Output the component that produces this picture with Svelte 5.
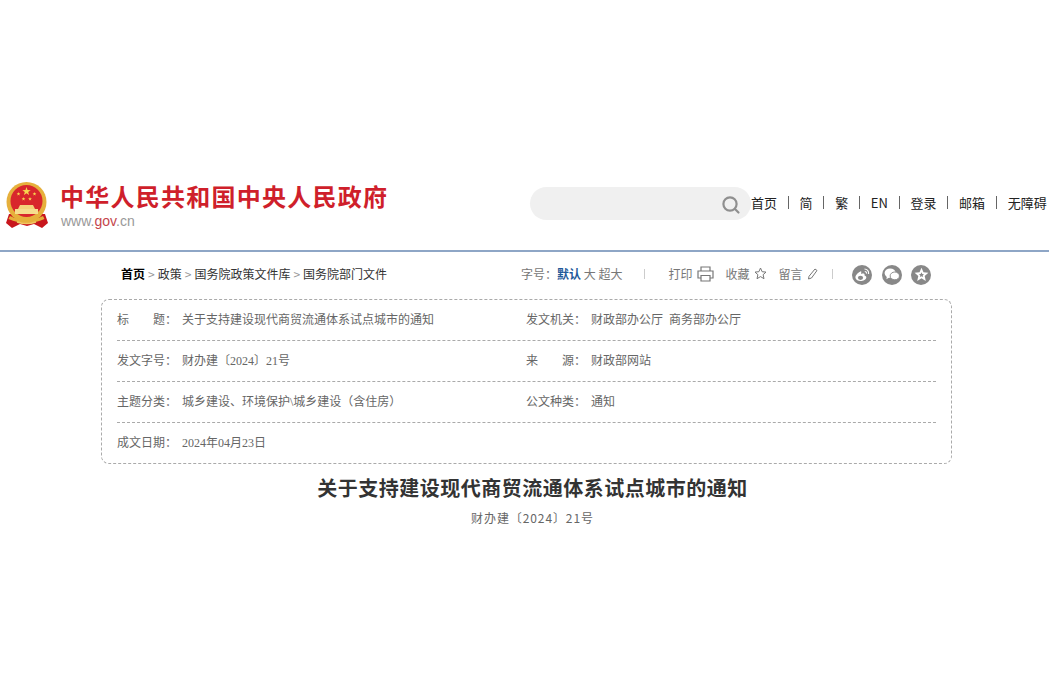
<script>
  const navItems = ['首页', '简', '繁', 'EN', '登录', '邮箱', '无障碍'];
  const infoRows = [
    [['标　　题：', '关于支持建设现代商贸流通体系试点城市的通知'], ['发文机关：', '财政部办公厅  商务部办公厅']],
    [['发文字号：', '财办建〔2024〕21号'], ['来　　源：', '财政部网站']],
    [['主题分类：', '城乡建设、环境保护\\城乡建设（含住房）'], ['公文种类：', '通知']],
    [['成文日期：', '2024年04月23日']]
  ];

  // five-point star for the emblem
  function star(cx, cy, r) {
    const pts = [];
    for (let i = 0; i < 10; i++) {
      const rad = i % 2 ? r * 0.4 : r;
      const a = -Math.PI / 2 + (i * Math.PI) / 5;
      pts.push((cx + rad * Math.cos(a)).toFixed(2) + ',' + (cy + rad * Math.sin(a)).toFixed(2));
    }
    return pts.join(' ');
  }

  const smallStars = [[13.5, 13], [18.5, 18], [25, 18], [29.5, 13]];
</script>

<div class="page">
  <header class="header">
    <div class="logo">
      <svg class="emblem" width="44" height="48" viewBox="0 0 44 48">
        <path d="M4 33 L1 42 L7 47 L15 43 L22 45 L29 43 L37 47 L43 42 L40 33 Z" fill="#c8161d" />
        <circle cx="21.5" cy="21" r="20" fill="#e6b03c" />
        <circle cx="21.5" cy="20" r="16" fill="#d8262c" />
        <polygon points={star(21.5, 10.5, 4.4)} fill="#f7d64f" />
        {#each smallStars as s}
          <polygon points={star(s[0], s[1], 2)} fill="#f7d64f" />
        {/each}
        <path d="M15 24 h13 l2 4 h-17 Z" fill="#f3d27a" />
        <path d="M10 28 h23 v5 h-23 Z" fill="#f6dd8e" />
        <path d="M5 35 q16.5 8 33 0 l1.5 3 q-18 8 -36 0 Z" fill="#e6b03c" />
        <path d="M12 41 q9.5 3 19 0" fill="none" stroke="#f0c860" stroke-width="1.4" />
      </svg>
      <div class="logo-text">
        <div class="logo-title">中华人民共和国中央人民政府</div>
        <div class="logo-url">www.<b>gov</b>.cn</div>
      </div>
    </div>
    <div class="search">
      <svg width="20" height="20" viewBox="0 0 20 20" fill="none" stroke="#8f8f8f" stroke-width="2.2">
        <circle cx="9" cy="9" r="6.6" />
        <path d="M14 14 L17.5 17.5" stroke-linecap="round" />
      </svg>
    </div>
    <nav class="nav">
      {#each navItems as item, i}
        {#if i > 0}<span class="nav-sep"></span>{/if}
        <span>{item}</span>
      {/each}
    </nav>
  </header>

  <main class="content">
    <div class="toolbar">
      <div class="crumbs">
        <b>首页</b><i>&gt;</i>政策<i>&gt;</i>国务院政策文件库<i>&gt;</i>国务院部门文件
      </div>
      <div class="tools">
        <span class="size-label">字号：<b>默认</b> 大 超大</span>
        <span class="tool-sep first"></span>
        <span class="tool t-print">打印
          <svg width="17" height="16" viewBox="0 0 17 16" fill="none" stroke="#777" stroke-width="1.2">
            <path d="M4 5 V1 H13 V5 M4 12 H1 V5 H16 V12 H13 M4 9.5 H13 V15 H4 Z" />
          </svg>
        </span>
        <span class="tool t-fav">收藏
          <svg width="13" height="13" viewBox="0 0 13 13" fill="none" stroke="#777" stroke-width="1">
            <path d="M6.5 1 L8.1 4.7 L12 5.1 L9.1 7.7 L10 11.7 L6.5 9.6 L3 11.7 L3.9 7.7 L1 5.1 L4.9 4.7 Z" />
          </svg>
        </span>
        <span class="tool t-msg">留言
          <svg width="11" height="12" viewBox="0 0 11 12" fill="none" stroke="#777" stroke-width="1">
            <path d="M8 1 L10 2.5 L4.5 10 L1.5 11 L2 8.3 Z" />
          </svg>
        </span>
        <span class="tool-sep"></span>
        <div class="share">
          <span class="share-btn">
            <svg width="16" height="14" viewBox="0 0 16 14">
              <path d="M6.5 3.5 C3.5 5 1 7.5 1.5 10 C2 12.5 5.5 13.5 8.5 12.8 C11.5 12 13 10 12 8.5 C11.5 7.7 10.5 7.6 10.5 7.2 C11 5.6 9.5 5 7 6 C7.5 4 7.5 3 6.5 3.5 Z" fill="#fff" />
              <ellipse cx="6.5" cy="9.8" rx="2.6" ry="2.1" fill="#888" />
              <path d="M10.5 1 C13 1 15 3 14.6 6 M10.8 3.5 C12 3.5 12.8 4.3 12.6 5.6" stroke="#fff" stroke-width="1.1" fill="none" />
            </svg>
          </span>
          <span class="share-btn">
            <svg width="16" height="13" viewBox="0 0 17 14" fill="#fff">
              <ellipse cx="6.5" cy="5.5" rx="6" ry="5" />
              <path d="M3 9 L2.5 12 L6 10 Z" />
              <ellipse cx="11.5" cy="8.5" rx="5" ry="4.2" stroke="#888" stroke-width="1" />
            </svg>
          </span>
          <span class="share-btn">
            <svg width="15" height="15" viewBox="0 0 15 15">
              <path d="M7.5 .8 L9.5 5.3 L14.4 5.8 L10.7 9 L11.8 13.9 L7.5 11.3 L3.2 13.9 L4.3 9 L.6 5.8 L5.5 5.3 Z" fill="#fff" />
              <path d="M7.5 5.2 L8.3 7 L10 7.2 L8.7 8.4 L9.1 10.1 L7.5 9.2 L5.9 10.1 L6.3 8.4 L5 7.2 L6.7 7 Z" fill="#888" />
            </svg>
          </span>
        </div>
      </div>
    </div>

    <div class="info">
      {#each infoRows as row}
        <div class="info-row">
          {#each row as cell}
            <div class="info-cell">
              <span class="info-label">{cell[0]}</span>
              <span class="info-value">{cell[1]}</span>
            </div>
          {/each}
        </div>
      {/each}
    </div>

    <h1 class="title">关于支持建设现代商贸流通体系试点城市的通知</h1>
    <p class="doc-no">财办建〔2024〕21号</p>
  </main>
</div>

<style>
  :global(body) {
    margin: 0;
    background: #fff;
  }

  .page {
    height: 700px;
    overflow: hidden;
    font-family: "Noto Sans CJK SC", "Noto Sans", sans-serif;
    color: #666;
  }

  .header {
    height: 252px;
    box-sizing: border-box;
    padding-top: 181px;
    padding-left: 5px;
    display: flex;
    align-items: flex-start;
    border-bottom: 2px solid #8ea6c6;
  }

  .logo {
    display: flex;
    width: 525px;
    flex-shrink: 0;
    gap: 11px;
  }

  .emblem {
    flex-shrink: 0;
  }

  .logo-title {
    font-size: 24px;
    line-height: 30px;
    font-weight: 700;
    color: #cf1f2b;
    letter-spacing: 1.25px;
    white-space: nowrap;
  }

  .logo-url {
    font-family: "Liberation Sans", sans-serif;
    font-size: 14px;
    line-height: 16px;
    margin: 2px 0 0 1px;
    color: #999;
  }

  .logo-url b {
    font-weight: 400;
    color: #c4454c;
  }

  .search {
    width: 221px;
    height: 33px;
    margin-top: 6px;
    flex-shrink: 0;
    background: #f0f0f0;
    border-radius: 17px;
    display: flex;
    align-items: center;
    justify-content: flex-end;
    box-sizing: border-box;
    padding: 2px 10px 0 0;
  }

  .nav {
    display: flex;
    align-items: center;
    height: 31px;
    margin-top: 6px;
    font-size: 13px;
    color: #222;
    white-space: nowrap;
  }

  .nav-sep {
    width: 1px;
    height: 13px;
    background: #666;
    margin: 0 10.8px;
  }

  .content {
    width: 851px;
    margin-left: 101px;
  }

  .toolbar {
    display: flex;
    height: 43px;
    align-items: center;
    font-size: 12px;
    white-space: nowrap;
  }

  .crumbs {
    width: 420px;
    box-sizing: border-box;
    padding-left: 20px;
    color: #333;
  }

  .crumbs b {
    color: #000;
  }

  .crumbs i {
    font-style: normal;
    color: #999;
    margin: 0 3px;
  }

  .tools {
    display: flex;
    align-items: center;
    color: #777;
  }

  .size-label b {
    color: #1f5a9a;
  }

  .tool-sep {
    width: 1px;
    height: 10px;
    background: #ccc;
    margin: 0 0 0 14px;
  }

  .tool-sep.first {
    margin: 0 23px 0 22px;
  }

  .tool {
    display: flex;
    align-items: center;
    gap: 5px;
  }

  .t-print {
    margin-right: 11px;
  }

  .t-fav {
    margin-right: 11px;
  }

  .share {
    display: flex;
    gap: 9.5px;
    margin-left: 19px;
    margin-top: 2px;
  }

  .share-btn {
    width: 20px;
    height: 20px;
    border-radius: 50%;
    background: #888;
    display: flex;
    align-items: center;
    justify-content: center;
  }

  .info {
    box-sizing: border-box;
    border: 1px dashed #aaa;
    border-radius: 8px;
    padding: 0 15px;
    height: 165px;
    margin-top: 4px;
  }

  .info-row {
    display: flex;
    height: 41px;
    box-sizing: border-box;
    align-items: center;
    padding-bottom: 2px;
    border-bottom: 1px dashed #aaa;
    font-size: 12px;
  }

  .info-row:last-child {
    border-bottom: none;
    padding-bottom: 4px;
  }

  .info-cell {
    width: 409px;
    flex-shrink: 0;
    display: flex;
    white-space: pre;
  }

  .info-label {
    width: 65px;
    flex-shrink: 0;
  }

  .info-value {
    font-family: "Liberation Serif", "Noto Sans CJK SC", serif;
  }

  .title {
    margin: 10px 0 0;
    padding-left: 12px;
    text-align: center;
    font-size: 20px;
    line-height: 28px;
    letter-spacing: 0.5px;
    font-weight: 700;
    color: #333;
  }

  .doc-no {
    margin: 7px 0 0;
    padding-left: 12px;
    text-align: center;
    font-size: 12px;
    line-height: 18px;
    letter-spacing: 0.9px;
    color: #666;
  }
</style>
